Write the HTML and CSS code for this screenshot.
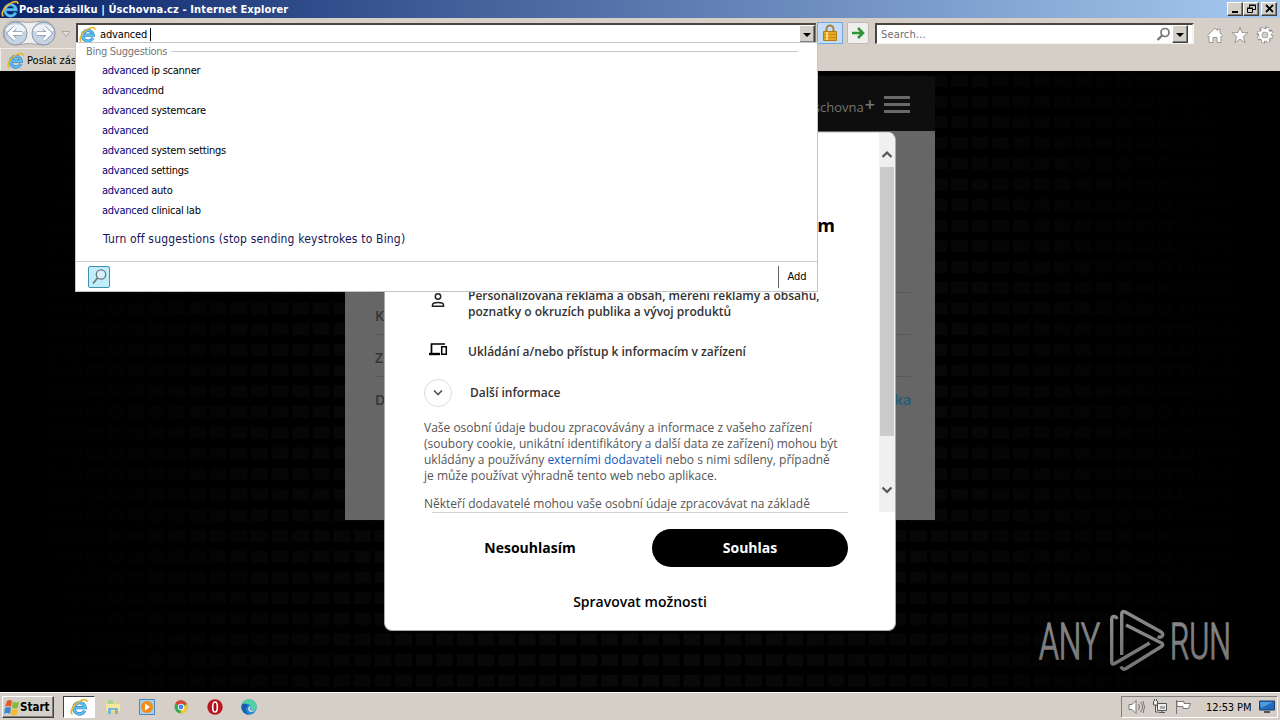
FILE: index.html
```html
<!DOCTYPE html>
<html lang="cs">
<head>
  <meta charset="UTF-8" />
  <title>Poslat zásilku | Úschovna.cz</title>
  <link rel="stylesheet" href="styles.css">
</head>
<body>

<svg class="defs" width="0" height="0">
  <defs>
    <linearGradient id="mark" x1="0" y1="0" x2="0" y2="1">
      <stop offset="0" stop-color="#8a8a8a"/>
      <stop offset="1" stop-color="#747474"/>
    </linearGradient>
  </defs>
  <symbol id="ie" viewBox="0 0 16 16">
    <path d="M13 11.2A5 5 0 1 1 13.4 8.6H4.6" fill="none" stroke="#2b86cc" stroke-width="3"/>
    <path d="M13 11.2A5 5 0 1 1 13.4 8.6H4.6" fill="none" stroke="#5fc1f2" stroke-width="1.7"/>
    <path d="M2.2 14.6C-.8 12.4 3 6 8 3.2 11.5 1 15.2.4 15 3.6" fill="none" stroke="#e9b52c" stroke-width="1.5"/>
  </symbol>
</svg>

<header class="titlebar">
  <svg class="ie" width="18" height="18"><use href="#ie"/></svg>
  <h1>Poslat zásilku | Úschovna.cz - Internet Explorer</h1>
  <div class="win-buttons">
    <button><svg width="11" height="10"><path d="M2 8h6" stroke="#000" stroke-width="2"/></svg></button>
    <button><svg width="11" height="10" fill="none" stroke="#000"><path d="M3.5 4V1.5h6v4H7M3 1h7M1.5 4.500h5v4h-5zM1 4h6"/></svg></button>
    <button class="close"><svg width="11" height="10"><path d="M2 1l7 7M9 1l-7 7" stroke="#000" stroke-width="1.8"/></svg></button>
  </div>
</header>

<nav class="toolbar">
  <svg class="arrows" width="74" height="28" viewBox="0 0 74 28">
    <path d="M15 3Q29 6 43 3a12 12 0 0 1 0 24Q29 24 15 27a12 12 0 0 1 0-24z" fill="#eeeeef" stroke="#a5a5a8"/>
    <g fill="#c6d3e0" stroke="#8796a9">
      <circle cx="15.5" cy="15.5" r="11.500"/>
      <circle cx="43.5" cy="15.5" r="11.500"/>
    </g>
    <path d="M5 12.500a11 9 0 0 1 21 0q-10 5-21 0M33 12.500a11 9 0 0 1 21 0q-10 5-21 0" fill="#edf3f8"/>
    <path d="M22 15.500H9m6-6l-6 6 6 6M37 15.500h13m-6-6l6 6-6 6" fill="none" stroke="#8798ac" stroke-width="4.500"/>
    <path d="M22 15.500H9m6-6l-6 6 6 6M37 15.500h13m-6-6l6 6-6 6" fill="none" stroke="#fff" stroke-width="3"/>
    <path d="M62 13.500h8l-4 5z" fill="#e4e1dc" stroke="#aaa6a0"/>
  </svg>
  <div class="address">
    <svg class="ie" width="17" height="17"><use href="#ie"/></svg>
    <span class="typed">advanced</span><i class="caret"></i>
    <button class="drop"></button>
  </div>
  <div class="lock">
    <svg width="14" height="18" viewBox="0 0 14 18">
      <path d="M3.500 8V5a3.500 3.500 0 0 1 7 0v3" fill="none" stroke="#a5853b" stroke-width="2"/>
      <path d="M.5 7.500h13v9H.5z" fill="#e9a820" stroke="#b17b15"/>
      <path d="M1 10.500h12M1 13.500h12" stroke="#c28a1a"/><path d="M4 8v8" stroke="#ffdc78" stroke-width="2"/>
    </svg>
  </div>
  <button class="go"><svg width="14" height="14" fill="none" stroke="#2f9438" stroke-width="2.500"><path d="M1 7h11M7 2l5 5-5 5"/></svg></button>
  <div class="search">
    <span>Search...</span>
    <svg width="15" height="15" fill="none" stroke="#777"><circle cx="9" cy="5.500" r="4" stroke-width="1.700"/><path d="M6 8.500L1.500 13" stroke-width="2.300"/></svg>
    <button class="drop"></button>
  </div>
  <div class="tools">
    <svg width="18" height="18" viewBox="0 0 18 18" fill="#fff" stroke="#999"><path d="M1.500 9.500L9 2l2.500 2.500V3h2.500v4l2.500 2.500-1 1.200L15 10v6.500h-4v-5H7v5H3V10l-.5.700z"/></svg>
    <svg width="18" height="18" viewBox="0 0 18 18" fill="#fff" stroke="#999"><path d="M9 1l2 5.500 6 .3-4.600 3.700L14 16.500l-5-3.300-5 3.300 1.600-6L1 6.800l6-.3z"/></svg>
    <svg width="18" height="18" viewBox="0 0 18 18" fill="none">
      <circle cx="9" cy="9" r="6.600" stroke="#8c8c8c" stroke-width="3.600" stroke-dasharray="3.400 1.780"/>
      <circle cx="9" cy="9" r="4.700" stroke="#8c8c8c" stroke-width="4"/>
      <circle cx="9" cy="9" r="6.400" stroke="#fff" stroke-width="2.600" stroke-dasharray="2 3.026" stroke-dashoffset="-.7"/>
      <circle cx="9" cy="9" r="4.600" stroke="#fff" stroke-width="2.600"/>
    </svg>
  </div>
</nav>

<div class="tabs">
  <div class="tab"><svg class="ie" width="17" height="17"><use href="#ie"/></svg><span>Poslat zásilku</span></div>
</div>

<main class="page">
  <div class="site">
    <div class="site-head"><span>schovna</span><b>+</b><i class="burger"></i></div>
    <div class="site-body">
      <div class="row"></div>
      <div class="row">K</div>
      <div class="row">Z</div>
      <div class="row">D<span class="brand">ka</span></div>
    </div>
  </div>

  <div class="consent">
    <div class="scroll">
      <div class="content">
        <h2>m</h2>
        <div class="purpose person">
          <svg width="24" height="20" viewBox="0 0 24 20" fill="none" stroke="#222" stroke-width="1.500"><circle cx="12" cy="5.500" r="2.700"/><path d="M6.500 15.200V14c0-3.300 11-3.300 11 0v1.200z"/></svg>
          <p>Personalizovaná reklama a obsah, měření reklamy a obsahu,<br>poznatky o okruzích publika a vývoj produktů</p>
        </div>
        <div class="purpose device">
          <svg width="24" height="20" viewBox="0 0 24 20" fill="none" stroke="#000"><path d="M5.500 13V4H19" stroke-width="1.700"/><path d="M3 14h11" stroke-width="2.400"/><path d="M15.700 6.700h4.600v7.600h-4.600z" stroke-width="1.500"/></svg>
          <p>Ukládání a/nebo přístup k informacím v zařízení</p>
        </div>
        <div class="more">
          <span class="round"><svg width="10" height="8" fill="none" stroke="#555" stroke-width="1.700"><path d="M1 1.500l4 4 4-4"/></svg></span>
          <p>Další informace</p>
        </div>
        <p class="legal">Vaše osobní údaje budou zpracovávány a informace z vašeho zařízení<br>(soubory cookie, unikátní identifikátory a další data ze zařízení) mohou být<br>ukládány a používány <a>externími dodavateli</a> nebo s nimi sdíleny, případně<br>je může používat výhradně tento web nebo aplikace.</p>
        <p class="legal">Někteří dodavatelé mohou vaše osobní údaje zpracovávat na základě</p>
      </div>
      <div class="scrollbar">
        <svg width="16" height="34" fill="none" stroke="#555" stroke-width="2.200"><path d="M3.500 24L8 19.500l4.500 4.500"/></svg>
        <i class="thumb"></i>
        <svg class="down" width="16" height="44" fill="none" stroke="#555" stroke-width="2.200"><path d="M3.500 19.500L8 24l4.500-4.500"/></svg>
      </div>
    </div>
    <div class="actions">
      <button>Nesouhlasím</button>
      <button class="agree">Souhlas</button>
      <button class="manage">Spravovat možnosti</button>
    </div>
  </div>

  <svg class="watermark" width="200" height="66" viewBox="0 0 200 66" fill="none" stroke="url(#mark)">
    <text x="2" y="51.500" textLength="61" lengthAdjust="spacingAndGlyphs">ANY</text>
    <g stroke-width="3.400" stroke-linejoin="round">
      <path d="M84.700 48V7q0-3.500 3.500-2l36 20q2.500 2 1 4-1.500 2-4.500.500"/>
      <path d="M89 18l35.500 18q2.500 1.500 0 3.500L89 61.500q-3.500 2-5-2"/>
      <path d="M80 12q-.8-2.500-3-2.500-2.300 0-2.300 3V55q0 3 3 1.500l35-20.500"/>
    </g>
    <text x="133" y="51.500" textLength="61" lengthAdjust="spacingAndGlyphs">RUN</text>
  </svg>
</main>

<footer class="taskbar">
  <button class="start">
    <svg width="17" height="17" viewBox="0 0 17 17"><path d="M4 2q3-2 5 0L8 8Q5 6 2 8z" fill="#e8572c"/><path d="M10 2.500q3 2 6 0l-1 6q-3 2-6 0z" fill="#83bb3c"/><path d="M2 9q3-2 6 0l-1 6q-3-2-6 0z" fill="#3f87cf"/><path d="M9 9.500q3 2 6 0l-1 6q-3 2-6 0z" fill="#f5bd2e"/></svg>
    <span>Start</span>
  </button>
  <div class="quick">
    <span class="running"><svg width="18" height="18"><use href="#ie"/></svg></span>
    <svg width="16" height="16" viewBox="0 0 16 16"><path d="M1 2h6l1 2h6v10H1z" fill="#efd478"/><path d="M3 1h5v4H3z" fill="#a3d39b"/><path d="M1 5h14v7H1z" fill="#f7e6a0"/><path d="M3 15V9h10v6h-3v-4H6v4z" fill="#72b8de"/></svg>
    <svg width="16" height="16" viewBox="0 0 16 16"><path d="M.5.500h15v15H.5z" fill="#a5cdec" stroke="#4c88ba"/><circle cx="8" cy="8" r="6" fill="#f28b19"/><path d="M6 4.500l5 3.500-5 3.500z" fill="#fff"/></svg>
    <svg width="14" height="14" viewBox="0 0 14 14"><circle cx="7" cy="7" r="6.500" fill="#36a655"/><path d="M7 7L1.300 3.600A6.500 6.500 0 0 1 13 4.500H7z" fill="#dc4437"/><path d="M7 7l6-2.500A6.500 6.500 0 0 1 6.500 13.500z" fill="#f8c931"/><circle cx="7" cy="7" r="3.200" fill="#fff"/><circle cx="7" cy="7" r="2.400" fill="#4285e8"/></svg>
    <svg width="16" height="16" viewBox="0 0 16 16"><circle cx="8" cy="8" r="7.700" fill="#ba1820"/><ellipse cx="8" cy="8" rx="2.300" ry="5" fill="#a90d16" stroke="#fff" stroke-width="1.600"/></svg>
    <svg width="16" height="16" viewBox="0 0 16 16"><circle cx="8" cy="8" r="7.700" fill="#2088d4"/><path d="M1 5a7.600 7.600 0 0 1 14.600 3c0 4-5 4-6 2 2-3-2-6-5-5-2 0-3 0-3.600 0z" fill="#4fd2a2"/><path d="M.6 6c-1 6 3 9.500 7.400 9.700C4 13 4 8 7.500 7 5 4 2 4.500.6 6" fill="#185eac"/><path d="M8 7c2 0 2 2 1 3 1 2 5 2 6 0-1 3-7 5-8 0z" fill="#d5d2cb"/></svg>
  </div>
  <div class="tray">
    <svg width="17" height="16" fill="#fff" stroke="#777"><path d="M1 5.500h3l4-4v13l-4-4H1z"/><path d="M10.500 5q2 3 0 6M12.500 3q4 5 0 10M15 2q3 6 0 12" fill="none"/></svg>
    <svg width="16" height="16" fill="#eee" stroke="#555"><path d="M5.500 4.500h9v7h-9zM7 13.500h6M10 12v2M1.500 2v4h4V2M3.500 6v7h3"/><path d="M2.500 0v2M4.500 0v2"/><path d="M8 7h5v3H8z" fill="#aaa" stroke="none"/></svg>
    <svg width="17" height="16" fill="#fff" stroke="#777"><path d="M1.500 1v14M2 2.500h7v2h6.500l-2 5H8v-2H2z"/></svg>
    <time>12:53 PM</time>
    <svg width="16" height="14"><path d="M.5 1h15v9H.5z" fill="#2469bd" stroke="#1c3f72"/><path d="M1 2h13L2 8z" fill="#4e9be0"/><path d="M5 12h6" stroke="#555" stroke-width="2"/></svg>
  </div>
</footer>

<section class="suggest">
  <h3><span>Bing Suggestions</span></h3>
  <ul>
    <li><b>advanced</b> ip scanner</li>
    <li><b>advanced</b>md</li>
    <li><b>advanced</b> systemcare</li>
    <li><b>advanced</b></li>
    <li><b>advanced</b> system settings</li>
    <li><b>advanced</b> settings</li>
    <li><b>advanced</b> auto</li>
    <li><b>advanced</b> clinical lab</li>
  </ul>
  <a class="turn-off">Turn off suggestions (stop sending keystrokes to Bing)</a>
  <div class="providers">
    <span class="provider"><svg width="18" height="18" fill="#d7f1fb" stroke="#6c7782"><circle cx="11" cy="6.500" r="4.700" stroke-width="1.300"/><path d="M7.500 10L3 15.500" stroke-width="1.800"/></svg></span>
    <button>Add</button>
  </div>
</section>

</body>
</html>
```

FILE: styles.css
```css
* {
  box-sizing: border-box;
}

body {
  margin: 0;
  width: 1280px;
  height: 720px;
  overflow: hidden;
  position: relative;
  display: flex;
  flex-direction: column;
  font-family: "DejaVu Sans Condensed", "DejaVu Sans", sans-serif;
  font-stretch: condensed;
  font-size: 11px;
  color: #000;
  background: #d4d0c8;
}

h1, h2, h3, p, ul {
  margin: 0;
  padding: 0;
}

button {
  font: inherit;
  border: 0;
  padding: 0;
  background: none;
}

svg {
  flex: none;
}

.defs {
  position: absolute;
}

/* window frame */
.titlebar {
  height: 18px;
  display: flex;
  align-items: center;
  padding: 0 3px 0 1px;
  background: linear-gradient(to right, #0a246a, #a6caf0);
  color: #fff;
}

.titlebar h1 {
  font-size: 11px;
  font-weight: bold;
  letter-spacing: 0.12px;
}

.win-buttons {
  margin-left: auto;
  display: flex;
}

.win-buttons button,
.drop,
.start {
  background: #d4d0c8;
  border: 1px solid;
  border-color: #fff #404040 #404040 #fff;
  box-shadow: inset -1px -1px #808080;
}

.win-buttons button {
  width: 16px;
  height: 14px;
  line-height: 0;
}

.win-buttons .close {
  margin-left: 2px;
}

.toolbar {
  height: 30px;
  display: flex;
  align-items: flex-start;
  background: #d5cfc8;
}

.arrows {
  margin-right: 2px;
}

.address,
.search {
  display: flex;
  align-items: center;
  background: #fff;
  border: 1px solid #808080;
  border-top: 2px solid #494540;
  border-left: 2px solid #494540;
}

.address {
  width: 740px;
  height: 21px;
  margin-top: 5px;
  padding-left: 1px;
}

.typed {
  margin-left: 4px;
  letter-spacing: -0.15px;
}

.caret {
  width: 1px;
  height: 13px;
  margin-left: 3px;
  background: #000;
}

.drop {
  width: 16px;
  height: 18px;
  margin-left: auto;
}

.drop::before {
  content: "";
  display: block;
  margin: 1px auto 0;
  width: 0;
  border: 4px solid transparent;
  border-top-color: #000;
  border-bottom: 0;
}

.lock {
  width: 26px;
  height: 22px;
  margin: 4px 0 0 1px;
  display: flex;
  align-items: center;
  justify-content: center;
  background: #c5dcf7;
  border: 1px solid #78a8e0;
}

.go {
  width: 22px;
  height: 22px;
  margin: 4px 0 0 4px;
  display: flex;
  align-items: center;
  justify-content: center;
  background: #f1efed;
  border: 1px solid #bdbab6;
  border-radius: 2px;
}

.search {
  width: 319px;
  height: 21px;
  margin: 5px 0 0 6px;
  padding: 0 4px 0 4px;
  border-right: 2px solid #f5f3ef;
  border-bottom-color: #f5f3ef;
  color: #6d6d6d;
}

.search svg {
  margin-left: auto;
}

.search span {
  letter-spacing: 0.15px;
}

.search .drop {
  margin-left: 1px;
}

.tools {
  display: flex;
  gap: 7px;
  margin: 8px 0 0 12px;
}

.tabs {
  height: 23px;
  background: #d5cfc8;
}

.tab {
  width: 200px;
  height: 23px;
  display: flex;
  align-items: center;
  gap: 3px;
  padding-left: 6px;
  border: 1px solid #eeece8;
  border-bottom: 0;
}

/* web page */
.page {
  height: 621px;
  position: relative;
  font-family: "Open Sans", sans-serif;
  font-stretch: normal;
  background:
    radial-gradient(ellipse 620px 900px at 640px 310px, transparent 30%, #000 100%),
    linear-gradient(transparent 12px, #000 12px) 0 4px / 20.600px 20.700px,
    linear-gradient(to right, #000 4px, #090909 4px) 0 0 / 20.600px 20.700px;
}

.site {
  width: 590px;
  height: 444px;
  margin: 0 auto;
  padding-top: 5px;
  position: relative;
  top: 5px;
  background: #0e0e0e;
}

.site-head {
  height: 50px;
  display: flex;
  justify-content: flex-end;
  align-items: center;
  padding-right: 25px;
  font-size: 13px;
  color: #747474;
}

.site-head span {
  margin-top: 1px;
}

.site-head b {
  margin: -5px 9px 0 1px;
  font-size: 18px;
  font-weight: 600;
}

.burger {
  width: 26px;
  height: 17px;
  margin-top: -3px;
  border-top: 3px solid #686868;
  border-bottom: 3px solid #686868;
  background: linear-gradient(#686868, #686868) center / 100% 3px no-repeat;
}

.site-body {
  height: 389px;
  padding: 120px 24px 0 30px;
  background: #666;
}

.row {
  height: 42px;
  padding-top: 3px;
  border-bottom: 1px solid #595959;
  font-size: 14px;
  font-weight: 600;
  line-height: 40px;
  color: #333;
}

.row:last-child {
  display: flex;
  justify-content: space-between;
  border: 0;
}

.brand {
  font-family: Lato, sans-serif;
  font-size: 16px;
  font-weight: bold;
  line-height: 38px;
  color: #1f5f78;
}

.consent {
  position: absolute;
  left: 384px;
  top: 61px;
  width: 512px;
  height: 499px;
  background: #fff;
  border: 1px solid #aaa;
  border-top-color: #ddd;
  border-radius: 8px;
  overflow: hidden;
}

.scroll {
  height: 379px;
  display: flex;
  justify-content: space-between;
}

.content {
  width: 426px;
  margin-left: 39px;
  padding-top: 80px;
  color: #555;
  font-size: 12px;
  line-height: 16px;
}

.content h2 {
  width: 411px;
  height: 75px;
  color: #000;
  font-size: 18px;
  line-height: 24px;
  text-align: right;
}

.purpose {
  display: flex;
  gap: 18px;
  padding-left: 2px;
  color: #333;
  font-weight: 600;
}

.person svg {
  margin-top: 3px;
}

.device {
  margin-top: 24px;
}

.device svg {
  margin-top: -4px;
}

.more {
  height: 28px;
  display: flex;
  align-items: center;
  gap: 18px;
  margin-top: 19px;
  margin-bottom: 13px;
  color: #333;
  font-weight: 600;
}

.round {
  width: 28px;
  height: 28px;
  display: flex;
  align-items: center;
  justify-content: center;
  border: 1px solid #ddd;
  border-radius: 50%;
}

.legal {
  margin-bottom: 12px;
  white-space: nowrap;
}

.legal a {
  color: #1558b8;
}

.scrollbar {
  width: 16px;
  display: flex;
  flex-direction: column;
  background: #f0f0f0;
}

.thumb {
  height: 269px;
  margin: 0 1px;
  background: #cbcbcb;
}

.down {
  margin-top: auto;
}

.actions {
  display: grid;
  grid-template-columns: 196px 196px;
  column-gap: 24px;
  justify-content: space-between;
  margin: 0 47px;
  padding-top: 16px;
  border-top: 1px solid #d4d4d4;
  font-size: 14px;
  font-weight: bold;
}

.actions button {
  height: 38px;
  padding-bottom: 1px;
}

.actions .agree {
  background: #000;
  color: #fff;
  border-radius: 19px;
}

.actions .manage {
  grid-column: 1 / 3;
  margin-top: 16px;
  font-weight: 600;
}

.watermark {
  position: absolute;
  left: 1037px;
  top: 536px;
}

.watermark text {
  font-family: Roboto, sans-serif;
  font-size: 50px;
  font-weight: 300;
  fill: url(#mark);
  stroke-width: 1.4px;
}

/* taskbar */
.taskbar {
  height: 28px;
  display: flex;
  align-items: center;
  padding: 1px 2px 0;
  border-top: 1px solid #fff;
  background: #d5cfc8;
}

.start {
  width: 52px;
  height: 22px;
  display: flex;
  align-items: center;
  font-weight: bold;
  font-size: 11.500px;
}

.quick {
  display: flex;
  align-items: center;
  gap: 18px;
  margin-left: 9px;
}

.quick svg:nth-child(4) {
  margin: 0 1px;
}

.running {
  width: 32px;
  height: 22px;
  display: flex;
  align-items: center;
  justify-content: center;
  margin-right: -8px;
  background: #fff;
  border: 1px solid;
  border-color: #404040 #fff #fff #404040;
}

.tray {
  width: 157px;
  height: 22px;
  margin-left: auto;
  display: flex;
  align-items: center;
  gap: 7px;
  padding-left: 6px;
  border: 1px solid;
  border-color: #808080 #fff #fff #808080;
}

.tray time {
  width: 46px;
  margin-left: 7px;
  white-space: nowrap;
  letter-spacing: -0.1px;
}

/* address bar dropdown */
.suggest {
  position: absolute;
  left: 75px;
  top: 42px;
  width: 743px;
  height: 250px;
  background: #fff;
  border: 1px solid #c5c5c5;
}

.suggest h3 {
  height: 17px;
  display: flex;
  align-items: center;
  gap: 4px;
  margin: 0 19px 0 10px;
  font-size: 11px;
  font-weight: normal;
  letter-spacing: -0.28px;
  color: #777;
}

.suggest h3::after {
  content: "";
  flex: 1;
  height: 1px;
  background: #c8c8c8;
}

.suggest ul {
  list-style: none;
  padding: 1px 0 0 26px;
}

.suggest li {
  height: 20px;
  line-height: 20px;
  letter-spacing: -0.25px;
}

.suggest b {
  font-weight: normal;
  color: #000080;
}

.turn-off {
  display: block;
  height: 40px;
  padding-left: 27px;
  line-height: 36px;
  font-size: 12px;
  letter-spacing: 0.18px;
  color: #15155c;
}

.providers {
  height: 30px;
  display: flex;
  align-items: center;
  justify-content: space-between;
  padding: 0 0 0 12px;
  border-top: 1px solid #ccc;
}

.provider {
  width: 22px;
  height: 22px;
  padding: 1px;
  background: #c0ecfb;
  border: 1px solid #3c91ad;
  border-radius: 2px;
}

.providers button {
  width: 39px;
  height: 22px;
  padding-right: 2px;
  border-left: 1px solid #666;
}
```
